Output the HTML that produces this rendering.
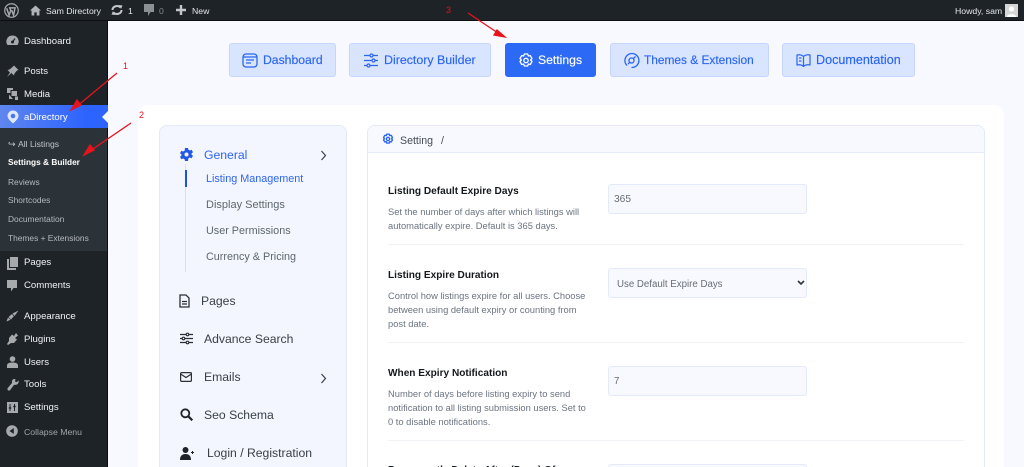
<!DOCTYPE html>
<html><head><meta charset="utf-8"><style>
html,body{margin:0;padding:0;width:1024px;height:467px;overflow:hidden}
body{position:relative;background:#f8f9ff;font-family:"Liberation Sans",sans-serif}
#w{position:absolute;left:0;top:0;width:1024px;height:467px;overflow:hidden;background:#f8f9ff}
#w div,#w span.t{position:absolute;box-sizing:border-box}
.t{white-space:nowrap;line-height:16px}
svg{position:absolute;overflow:visible}
.m{color:#f0f2f4;font-size:9.6px;left:24px}
.s{color:#b4b9be;font-size:8.4px;left:8px}
.a{color:#e6e8ea;font-size:8.7px}
.b{top:43px;height:34px;background:#d9e4fe;border:1px solid #c5d5fb;border-radius:3px}
.bt{top:52px;color:#2a66f0;font-size:12.4px;-webkit-text-stroke:.15px #2a66f0}
.n{font-size:12.2px;color:#3a4048}
.sn{font-size:10.8px;color:#5e6670;left:206px}
.l{left:388px;font-size:10.1px;font-weight:700;color:#15181c}
#w .d{left:388px;font-size:9.35px;color:#6b7480;line-height:14px;white-space:nowrap}
.i{left:608px;width:199px;height:30px;background:#f8f9ff;border:1px solid #e4eafb;border-radius:3px}
.v{font-size:9.7px;color:#676d75}
.hr{left:388px;width:576px;height:1px;background:#f1f2f6}
</style></head><body><div id="w">

<div style="left:0;top:0;width:1024px;height:21px;background:#1d2327;border-bottom:1px solid #0c0e10"></div>
<svg style="left:4px;top:3px" width="15" height="15" viewBox="0 0 20 20"><circle cx="10" cy="10" r="9" fill="none" stroke="#a7aaad" stroke-width="1.6"/><path d="M3.500 7l3.300 9.200L9 10 7.700 6.500h7l-2 9.700-2.500-6.700" fill="none" stroke="#a7aaad" stroke-width="2"/></svg>
<svg style="left:30px;top:5px" width="11" height="11" viewBox="0 0 12 12"><path d="M6 0.500L0 6h1.700v5.500h3V8h2.600v3.500h3V6H12z" fill="#b0b4b8"/></svg>
<span class="t a" style="left:46px;top:3px">Sam Directory</span>
<svg style="left:111px;top:4px" width="12" height="12" viewBox="0 0 12 12"><path d="M1.500 6a4.500 4 0 0 1 8-2.500M10.500 6a4.500 4 0 0 1-8 2.500" fill="none" stroke="#c4c7ca" stroke-width="2"/><path d="M8 1l3.500 0.500L10 5zM4 11l-3.500-0.500L2 7z" fill="#c4c7ca"/></svg>
<span class="t a" style="left:128px;top:3px">1</span>
<svg style="left:144px;top:4px" width="10" height="13" viewBox="0 0 10 13"><path d="M0 0h10v8H6.500L4 12V8H0z" fill="#8b9095"/></svg>
<span class="t a" style="left:159px;top:3px;color:#7f858a">0</span>
<svg style="left:176px;top:5px" width="10" height="10" viewBox="0 0 10 10"><path d="M3.800 0h2.400v3.800H10v2.400H6.200V10H3.800V6.200H0V3.800h3.800z" fill="#c4c7ca"/></svg>
<span class="t a" style="left:192px;top:3px">New</span>
<span class="t a" style="left:955px;top:3px">Howdy, sam</span>
<div style="left:1005px;top:4px;width:13px;height:13px;background:#d6d6d6"></div>
<svg style="left:1005px;top:4px" width="13" height="13"><circle cx="6.500" cy="5" r="2.600" fill="#fff"/><path d="M2 13c0-4 9-4 9 0z" fill="#fff"/></svg>

<div style="left:0;top:21px;width:107px;height:446px;background:#1d2327"></div>
<div style="left:107px;top:21px;width:1px;height:446px;background:#0c0e10"></div>
<div style="left:0;top:128px;width:107px;height:123px;background:#2c3338"></div>
<div style="left:0;top:105px;width:108px;height:23px;background:linear-gradient(90deg,#5f86ee,#2d63ff 80%)"></div>
<div style="left:102px;top:111px;width:0;height:0;border:6px solid transparent;border-left:0;border-right:6px solid #f8f9ff"></div>

<svg style="left:6px;top:35px" width="13" height="12" viewBox="0 0 13 12"><path d="M6.500 0.500a6 6 0 0 0-5 9.500h10a6 6 0 0 0-5-9.500z" fill="#a7aaad"/><circle cx="6.500" cy="7" r="1.500" fill="#1d2327"/><path d="M6.500 7L9 3.500" stroke="#1d2327" stroke-width="1.200"/></svg>
<span class="t m" style="top:34px">Dashboard</span>
<svg style="left:6px;top:65px" width="13" height="13" viewBox="0 0 13 13"><path d="M8 0.500l4.500 4.500-1.500 .5-2.500 3-.5 2-2.500-2.500L1 12l3-4.500L1.500 5l2-.5 3-2.500z" fill="#a7aaad"/></svg>
<span class="t m" style="top:64px">Posts</span>
<svg style="left:6px;top:88px" width="13" height="13" viewBox="0 0 13 13"><path d="M1 0h6v2H4.500v3H1zM5.500 3H11v5H5.500zM9 8.500h3v3.500H9zM3 6.500v4.500H7" fill="#a7aaad"/></svg>
<span class="t m" style="top:87px">Media</span>
<svg style="left:7px;top:110px" width="12" height="14" viewBox="0 0 12 14"><path d="M6 0.500a5.500 5.500 0 0 1 5.500 5.500c0 2-2.500 5-5.500 7.500C3 11 .5 8 .5 6A5.500 5.500 0 0 1 6 .5z" fill="#dfe8ff"/><circle cx="6" cy="6" r="2.300" fill="#4a78ea"/></svg>
<span class="t m" style="top:110px;color:#fff">aDirectory</span>

<span class="t" style="left:8px;top:136px;color:#c4c7ca;font-size:9px">↪</span>
<span class="t s" style="left:18px;top:136px;color:#c0c4c8;font-size:8.600px">All Listings</span>
<span class="t s" style="top:154px;color:#fff;font-weight:700;font-size:8.300px">Settings &amp; Builder</span>
<span class="t s" style="top:174px">Reviews</span>
<span class="t s" style="top:192px">Shortcodes</span>
<span class="t s" style="top:211px">Documentation</span>
<span class="t s" style="top:230px">Themes + Extensions</span>

<svg style="left:7px;top:257px" width="11" height="13" viewBox="0 0 11 13"><path d="M3 0h8v10H3z" fill="#a7aaad"/><path d="M0 2h2v9h7v2H0z" fill="#a7aaad"/></svg>
<span class="t m" style="top:255px">Pages</span>
<svg style="left:7px;top:280px" width="10" height="12" viewBox="0 0 10 12"><path d="M0 0h10v8H6.500L4 11.500V8H0z" fill="#a7aaad"/></svg>
<span class="t m" style="top:278px">Comments</span>
<svg style="left:6px;top:310px" width="13" height="12" viewBox="0 0 13 12"><path d="M12.500 0.500L6.500 3.500 8.500 6zM6 4L2.500 7 5 9.500 7.800 6.300zM2 7.500L0.500 11.500 4.500 9.800z" fill="#a7aaad"/></svg>
<span class="t m" style="top:309px">Appearance</span>
<svg style="left:7px;top:333px" width="12" height="12" viewBox="0 0 12 12"><path d="M9 0L7 3 5 1.500 2 5v3L0 11l1 1 3-2h3l3-3.500-2-1.500 3-2.500z" fill="#a7aaad"/></svg>
<span class="t m" style="top:332px">Plugins</span>
<svg style="left:7px;top:356px" width="11" height="12" viewBox="0 0 11 12"><circle cx="5.500" cy="3" r="2.800" fill="#a7aaad"/><path d="M0 12V9.500C0 7.500 2 6.500 5.500 6.500S11 7.500 11 9.500V12z" fill="#a7aaad"/></svg>
<span class="t m" style="top:355px">Users</span>
<svg style="left:7px;top:378px" width="12" height="13" viewBox="0 0 12 13"><path d="M11.500 2.500L9.500 4.300 8 3.500 8.500 1.200C7 .5 5.300 1.300 5 3c-.1.800 0 1.300.2 1.800L.8 10c-.6.800-.5 1.700.2 2.300.7.500 1.500.5 2.100-.2l4-5.400c1.800.5 3.700-.3 4.400-2 .2-.6.200-1.300 0-2.200z" fill="#a7aaad"/></svg>
<span class="t m" style="top:377px">Tools</span>
<svg style="left:7px;top:402px" width="11" height="11" viewBox="0 0 11 11"><path d="M0 0h11v11H0z" fill="#a7aaad"/><path d="M3 2v7M7.500 2v7" stroke="#1d2327" stroke-width="1"/><path d="M1.800 6h2.400M6.300 4.500h2.400" stroke="#1d2327" stroke-width="1.500"/></svg>
<span class="t m" style="top:400px">Settings</span>
<svg style="left:6px;top:425px" width="12" height="12" viewBox="0 0 12 12"><circle cx="6" cy="6" r="5.800" fill="#a7aaad"/><path d="M7.800 3v6L3.500 6z" fill="#1d2327"/></svg>
<span class="t" style="left:24px;top:424px;font-size:8.700px;color:#a0a5aa">Collapse Menu</span>

<!-- top buttons -->
<div class="b" style="left:229px;width:107px"></div>
<svg style="left:242px;top:53px" width="16" height="15" viewBox="0 0 16 15" fill="none" stroke="#2a66f0" stroke-width="1.300"><rect x="1" y="1" width="14" height="13" rx="3"/><path d="M1 4h14M4 7h8M4 10h5"/></svg>
<span class="t bt" style="left:263px;font-size:12.200px">Dashboard</span>
<div class="b" style="left:349px;width:142px"></div>
<svg style="left:363px;top:53px" width="16" height="15" viewBox="0 0 16 15" fill="none" stroke="#2a66f0" stroke-width="1.200"><path d="M1 2.500h6M10 2.500h5M1 7.500h8M12 7.500h3M1 12.500h3M7 12.500h8"/><circle cx="8.500" cy="2.500" r="1.500"/><circle cx="10.500" cy="7.500" r="1.500"/><circle cx="5.500" cy="12.500" r="1.500"/></svg>
<span class="t bt" style="left:384px">Directory Builder</span>
<div class="b" style="left:505px;width:91px;background:#2c69f5;border-color:#2c69f5"></div>
<svg style="left:518px;top:53px" width="16" height="15" viewBox="0 0 16 15" fill="none" stroke="#fff" stroke-width="1.300"><path d="M6.300 1h3.400l.6 2 2-.4 1.700 3-1.400 1.400 1.400 1.500-1.700 3-2-.5-.6 2H6.300l-.6-2-2 .5-1.700-3 1.400-1.500L2 5.600l1.700-3 2 .4z" stroke-linejoin="round"/><circle cx="8" cy="7.500" r="2.200"/></svg>
<span class="t bt" style="left:538px;color:#fff;-webkit-text-stroke:.15px #fff;font-size:12.200px">Settings</span>
<div class="b" style="left:610px;width:159px"></div>
<svg style="left:624px;top:53px" width="15" height="15" viewBox="0 0 15 15" fill="none" stroke="#2a66f0" stroke-width="1.300"><path d="M3 12.500A7 7 0 1 1 7.500 14.500"/><circle cx="7.500" cy="7.500" r="2.500"/><path d="M4 11l1.700-1.700M9.500 5.500l2-2"/></svg>
<span class="t bt" style="left:644px;font-size:11.900px">Themes &amp; Extension</span>
<div class="b" style="left:782px;width:133px"></div>
<svg style="left:796px;top:53px" width="15" height="15" viewBox="0 0 15 15" fill="none" stroke="#2a66f0" stroke-width="1.200" stroke-linejoin="round"><path d="M7.500 3.500C6 1.800 3 1.500 1 2v10c2-.5 5-.3 6.500 1.500C9 11.700 12 11.500 14 12V2c-2-.5-5-.2-6.500 1.500zM7.500 3.500v10M3 5h2.500M3 8h2.500"/></svg>
<span class="t bt" style="left:816px;font-size:12.600px">Documentation</span>

<!-- card -->
<div style="left:138px;top:105px;width:866px;height:362px;background:#fff;border-radius:10px 10px 0 0"></div>

<!-- left panel -->
<div style="left:159px;top:125px;width:188px;height:342px;background:#f3f6fe;border:1px solid #e2e9fb;border-bottom:0;border-radius:8px 8px 0 0"></div>
<svg style="left:180px;top:148px" width="13" height="13" viewBox="0 0 13 13"><path d="M5 0h3l.4 1.800 1.500.7 1.700-.8 1.400 2.500-1.400 1.100v1.400l1.400 1.100-1.400 2.500-1.700-.8-1.500.7L8 13H5l-.4-1.800-1.500-.7-1.700.8L0 8.800l1.400-1.100V6.300L0 5.200l1.400-2.500 1.700.8 1.500-.7z" fill="#2257e8"/><circle cx="6.500" cy="6.500" r="2" fill="#f3f6fe"/></svg>
<span class="t n" style="left:204px;top:147px;color:#2d65f2">General</span>
<svg style="left:320px;top:150px" width="7" height="11" fill="none" stroke="#3a4048" stroke-width="1.200"><path d="M1.500 1l4 4.500-4 4.500"/></svg>
<div style="left:185px;top:164px;width:1px;height:108px;background:#d6e0f8"></div>
<div style="left:185px;top:170px;width:2px;height:17px;background:#1d52df"></div>
<span class="t sn" style="top:171px;color:#2d65f2">Listing Management</span>
<span class="t sn" style="top:197px;font-size:11px">Display Settings</span>
<span class="t sn" style="top:223px">User Permissions</span>
<span class="t sn" style="top:249px">Currency &amp; Pricing</span>

<svg style="left:179px;top:294px" width="11" height="14" viewBox="0 0 11 14" fill="none" stroke="#2b3036" stroke-width="1.300"><path d="M1 1h6l3 3v9H1zM3 7.500h5M3 10h5"/></svg>
<span class="t n" style="left:201px;top:293px">Pages</span>
<svg style="left:180px;top:332px" width="13" height="13" viewBox="0 0 13 13" fill="none" stroke="#2b3036" stroke-width="1.200"><path d="M0 2.500h6M9 2.500h4M0 6.500h2M5 6.500h8M0 10.500h6M9 10.500h4"/><circle cx="7.500" cy="2.500" r="1.300"/><circle cx="3.500" cy="6.500" r="1.300"/><circle cx="7.500" cy="10.500" r="1.300"/></svg>
<span class="t n" style="left:204px;top:331px">Advance Search</span>
<svg style="left:180px;top:372px" width="12" height="10" viewBox="0 0 12 10" fill="none" stroke="#2b3036" stroke-width="1.200"><rect x=".6" y=".6" width="10.800" height="8.800" rx="1"/><path d="M.6 2l5.400 3.500L11.400 2"/></svg>
<span class="t n" style="left:204px;top:369px">Emails</span>
<svg style="left:320px;top:373px" width="7" height="11" fill="none" stroke="#3a4048" stroke-width="1.200"><path d="M1.500 1l4 4.500-4 4.500"/></svg>
<svg style="left:180px;top:408px" width="13" height="13" viewBox="0 0 13 13" fill="none" stroke="#1f2429" stroke-width="1.800"><circle cx="5.300" cy="5.300" r="4"/><path d="M8.300 8.300l4 4" stroke-width="2.200"/></svg>
<span class="t n" style="left:204px;top:407px">Seo Schema</span>
<svg style="left:180px;top:447px" width="16" height="13" viewBox="0 0 16 13"><circle cx="5.500" cy="3" r="3" fill="#1f2429"/><path d="M0 13c0-4 2-6 5.500-6S11 9 11 13z" fill="#1f2429"/><path d="M12.500 4v3M11 5.500h3" stroke="#1f2429" stroke-width="1"/></svg>
<span class="t n" style="left:207px;top:445px">Login / Registration</span>

<!-- right panel -->
<div style="left:367px;top:125px;width:618px;height:342px;background:#fff;border:1px solid #e2e9fb;border-bottom:0;border-radius:8px 8px 0 0"></div>
<div style="left:368px;top:126px;width:616px;height:27px;background:#f8f9ff;border-bottom:1px solid #e6ebf8;border-radius:8px 8px 0 0"></div>
<svg style="left:382px;top:133px" width="12" height="12" viewBox="0 0 16 15" fill="none" stroke="#2a66f0" stroke-width="1.800"><path d="M6.300 1h3.400l.6 2 2-.4 1.700 3-1.400 1.400 1.400 1.500-1.700 3-2-.5-.6 2H6.300l-.6-2-2 .5-1.700-3 1.400-1.500L2 5.600l1.700-3 2 .4z" stroke-linejoin="round"/><circle cx="8" cy="7.500" r="2.200"/></svg>
<span class="t" style="left:400px;top:133px;font-size:10.600px;color:#454b52">Setting</span>
<span class="t" style="left:441px;top:133px;font-size:10.600px;color:#454b52">/</span>

<span class="t l" style="top:184px">Listing Default Expire Days</span>
<div class="d" style="top:205px">Set the number of days after which listings will<br>automatically expire. Default is 365 days.</div>
<div class="i" style="top:184px"></div>
<span class="t v" style="left:614px;top:192px;font-size:10.200px">365</span>
<div class="hr" style="top:244px"></div>

<span class="t l" style="top:268px">Listing Expire Duration</span>
<div class="d" style="top:289px">Control how listings expire for all users. Choose<br>between using default expiry or counting from<br>post date.</div>
<div class="i" style="top:268px"></div>
<span class="t v" style="left:617px;top:277px">Use Default Expire Days</span>
<svg style="left:797px;top:280px" width="8" height="6" fill="none" stroke="#30353a" stroke-width="1.600"><path d="M1 1l3 3 3-3"/></svg>
<div class="hr" style="top:342px"></div>

<span class="t l" style="top:366px">When Expiry Notification</span>
<div class="d" style="top:387px">Number of days before listing expiry to send<br>notification to all listing submission users. Set to<br>0 to disable notifications.</div>
<div class="i" style="top:366px"></div>
<span class="t v" style="left:614px;top:374px">7</span>
<div class="hr" style="top:440px"></div>

<div style="left:388px;top:463px;width:210px;height:4px;overflow:hidden"><span class="t l" style="left:0;top:0;line-height:16px;margin-top:0">Permanently Delete After (Days) Of</span></div>
<div style="left:608px;top:464px;width:199px;height:3px;background:#f8f9ff;border:1px solid #e4eafb;border-bottom:0;border-radius:3px 3px 0 0"></div>

<!-- annotations -->
<svg style="left:0;top:0" width="1024" height="467"><g stroke="#e8131b" stroke-width="1.300" fill="#e8131b"><path d="M117 73L76 107"/><path d="M71 110l6-10 4 5z"/><path d="M131 123L90 151"/><path d="M84 155l6-10 4 5z"/><path d="M468 13L498 33"/><path d="M505 37l-11-2 3-5z"/></g></svg>
<span class="t" style="left:123px;top:58px;color:#e8131b;font-size:9px">1</span>
<span class="t" style="left:139px;top:107px;color:#e8131b;font-size:9px">2</span>
<span class="t" style="left:446px;top:2px;color:#e8131b;font-size:9px">3</span>
</div></body></html>
